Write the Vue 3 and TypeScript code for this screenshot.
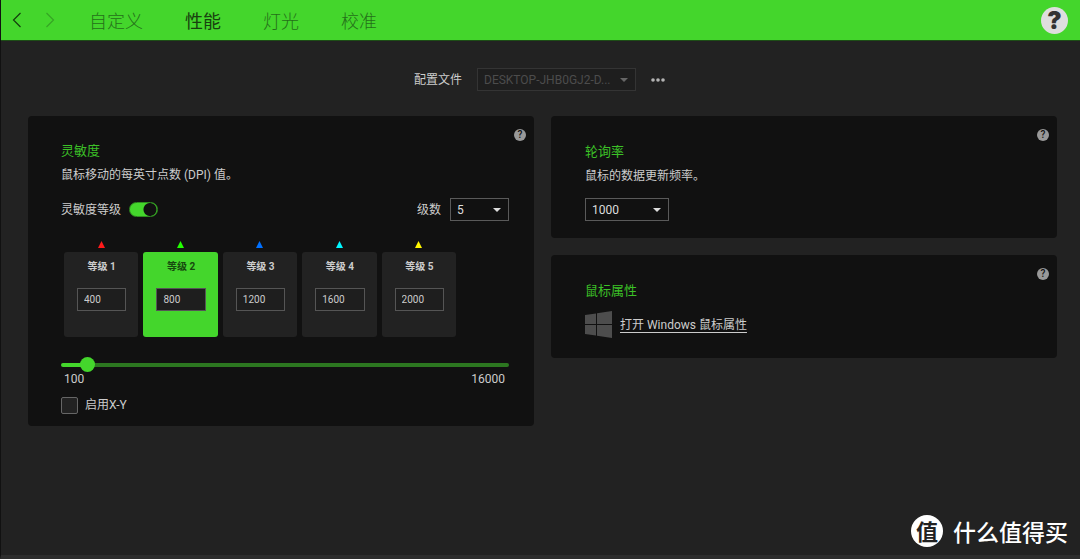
<script setup lang="ts">
import { computed, ref } from 'vue'

interface Tab {
  id: string
  label: string
}

interface Stage {
  id: number
  dpi: number
  color: string
}

const tabs: Tab[] = [
  { id: 'custom', label: '自定义' },
  { id: 'performance', label: '性能' },
  { id: 'lighting', label: '灯光' },
  { id: 'calibration', label: '校准' },
]
const activeTab = ref('performance')

const profile = ref('DESKTOP-JHB0GJ2-D...')

const stagesEnabled = ref(true)
const stageCount = ref(5)
const stages = ref<Stage[]>([
  { id: 1, dpi: 400, color: '#ff1a1a' },
  { id: 2, dpi: 800, color: '#22ff00' },
  { id: 3, dpi: 1200, color: '#0070ff' },
  { id: 4, dpi: 1600, color: '#00f6ff' },
  { id: 5, dpi: 2000, color: '#fff600' },
])
const activeStage = ref(2)
const visibleStages = computed(() => stages.value.slice(0, stageCount.value))

const minDpi = 100
const maxDpi = 16000
const dpi = computed({
  get: () => stages.value[activeStage.value - 1].dpi,
  set: (value: number) => {
    stages.value[activeStage.value - 1].dpi = value
  },
})
const fill = computed(() => `${((dpi.value - minDpi) / (maxDpi - minDpi)) * 100}%`)

const separateXY = ref(false)
const pollingRate = ref(1000)
</script>

<template>
  <div class="app">
    <header class="topbar">
      <button class="nav" type="button" aria-label="后退">
        <svg width="10" height="16" viewBox="0 0 10 16"><path d="M8.5 1 1.5 8l7 7" /></svg>
      </button>
      <button class="nav forward" type="button" aria-label="前进" disabled>
        <svg width="10" height="16" viewBox="0 0 10 16"><path d="m1.5 1 7 7-7 7" /></svg>
      </button>
      <nav class="tabs">
        <button
          v-for="tab in tabs"
          :key="tab.id"
          type="button"
          class="tab"
          :class="{ active: tab.id === activeTab }"
          @click="activeTab = tab.id"
        >
          {{ tab.label }}
        </button>
      </nav>
      <button class="help-main" type="button" aria-label="帮助">?</button>
    </header>

    <main class="content">
      <div class="profile">
        <label for="profile">配置文件</label>
        <span class="select wide disabled">
          <select id="profile" v-model="profile" disabled>
            <option>DESKTOP-JHB0GJ2-D...</option>
          </select>
        </span>
        <button class="more" type="button" aria-label="更多">
          <svg width="14" height="4" viewBox="0 0 14 4">
            <circle cx="2" cy="2" r="1.8" /><circle cx="7" cy="2" r="1.8" /><circle cx="12" cy="2" r="1.8" />
          </svg>
        </button>
      </div>

      <div class="columns">
        <section class="card sensitivity">
          <button class="help" type="button" aria-label="灵敏度帮助">?</button>
          <h2>灵敏度</h2>
          <p>鼠标移动的每英寸点数 (DPI) 值。</p>

          <div class="row">
            <label for="stages-on">灵敏度等级</label>
            <input id="stages-on" v-model="stagesEnabled" class="switch" type="checkbox" role="switch" />
            <label class="count-label" for="stage-count">级数</label>
            <span class="select small">
              <select id="stage-count" v-model="stageCount">
                <option v-for="n in 5" :key="n" :value="n">{{ n }}</option>
              </select>
            </span>
          </div>

          <div class="stages">
            <div
              v-for="stage in visibleStages"
              :key="stage.id"
              class="stage"
              :class="{ active: stage.id === activeStage }"
              @click="activeStage = stage.id"
            >
              <svg class="marker" width="7" height="7" viewBox="0 0 7 7">
                <path d="M3.5 0 7 7H0z" :fill="stage.color" />
              </svg>
              <div class="tile">
                <label :for="`stage-${stage.id}`">等级 {{ stage.id }}</label>
                <input :id="`stage-${stage.id}`" v-model.number="stage.dpi" type="text" inputmode="numeric" />
              </div>
            </div>
          </div>

          <input
            v-model.number="dpi"
            class="slider"
            type="range"
            :min="minDpi"
            :max="maxDpi"
            step="100"
            aria-label="DPI"
            :style="{ '--fill': fill }"
          />
          <div class="limits">
            <span>{{ minDpi }}</span>
            <span>{{ maxDpi }}</span>
          </div>

          <div class="check">
            <input id="xy" v-model="separateXY" type="checkbox" />
            <label for="xy">启用X-Y</label>
          </div>
        </section>

        <div class="side">
          <section class="card polling">
            <button class="help" type="button" aria-label="轮询率帮助">?</button>
            <h2>轮询率</h2>
            <p><label for="polling">鼠标的数据更新频率。</label></p>
            <span class="select medium">
              <select id="polling" v-model="pollingRate">
                <option :value="125">125</option>
                <option :value="500">500</option>
                <option :value="1000">1000</option>
              </select>
            </span>
          </section>

          <section class="card properties">
            <button class="help" type="button" aria-label="鼠标属性帮助">?</button>
            <h2>鼠标属性</h2>
            <div class="system">
              <svg width="27" height="27" viewBox="0 0 27 27">
                <path d="M0 4 11 2.4V13H0zM12 2.2 27 0v13H12zM0 14h11v10.6L0 23zM12 14h15v13l-15-2.2z" />
              </svg>
              <a href="#">打开 Windows 鼠标属性</a>
            </div>
          </section>
        </div>
      </div>
    </main>

    <div class="watermark">
      <span class="seal">值</span>
      <span>什么值得买</span>
    </div>
  </div>
</template>

<style>
body {
  margin: 0;
  background: #222;
}
</style>

<style scoped>
.app {
  --green: #44d62c;
  position: relative;
  box-sizing: border-box;
  display: flex;
  flex-direction: column;
  min-height: 100vh;
  border-left: 1px solid #111;
  border-bottom: 4px solid #2d2d2d;
  background: #222;
  color: #ccc;
  font: 12px/18px Roboto, "Noto Sans CJK SC", sans-serif;
}

button,
input,
select {
  box-sizing: border-box;
  margin: 0;
  padding: 0;
  border: 0;
  background: none;
  color: inherit;
  font: inherit;
}

button {
  cursor: pointer;
}

svg {
  display: block;
}

.topbar {
  display: flex;
  align-items: center;
  height: 40px;
  padding: 0 12px 0 11px;
  border-bottom: 1px solid #1d4d16;
  background: var(--green);
}

.nav svg {
  fill: none;
  stroke: #143d0e;
  stroke-width: 1.2;
}

.nav.forward {
  margin-left: 23px;
}

.nav.forward svg {
  stroke: #36a525;
}

.tabs {
  display: flex;
  gap: 42px;
  margin-left: 34px;
}

.tab {
  padding-top: 3px;
  color: #24701a;
  font-size: 18px;
  font-weight: 300;
  line-height: 28px;
}

.tab.active {
  color: #18400f;
  font-weight: 400;
}

.help-main {
  width: 27px;
  height: 27px;
  margin-left: auto;
  border-radius: 50%;
  background: #dedede;
  color: #333;
  font: 900 24px/27px Inter, sans-serif;
}

.content {
  flex: 1;
  padding: 27px 23px 24px 27px;
}

.profile {
  display: flex;
  align-items: center;
  justify-content: center;
  gap: 15px;
  padding-right: 6px;
}

.more svg {
  fill: #b4b4b4;
}

.select {
  position: relative;
  display: block;
  height: 23px;
}

.select::after {
  content: "";
  position: absolute;
  top: 10px;
  right: 8px;
  border: 4px solid transparent;
  border-top-color: #ddd;
  border-bottom: 0;
  pointer-events: none;
}

.select select {
  display: block;
  width: 100%;
  height: 23px;
  padding: 0 6px;
  border: 1px solid #5a5a5a;
  appearance: none;
  color: #ddd;
}

.select option {
  background: #222;
}

.select.disabled select {
  border-color: #343434;
  background: #1e1e1e;
  color: #4c4c4c;
  opacity: 1;
}

.select.disabled::after {
  border-top-color: #666;
}

.wide {
  width: 159px;
}

.medium {
  width: 84px;
}

.small {
  width: 59px;
}

.columns {
  display: grid;
  grid-template-columns: 1fr 1fr;
  align-items: start;
  gap: 17px;
  margin-top: 25px;
}

.side {
  display: grid;
  gap: 17px;
}

.card {
  position: relative;
  padding: 26px 25px 17px 34px;
  border-radius: 4px;
  background: #111;
}

.card.sensitivity {
  padding: 25px 25px 12px 33px;
}

.card h2 {
  margin: 0;
  color: #3cc027;
  font-size: 13px;
  font-weight: 400;
  line-height: 20px;
}

.card p {
  margin: 5px 0 0;
}

.help {
  position: absolute;
  top: 13px;
  right: 8px;
  width: 12px;
  height: 12px;
  border-radius: 50%;
  background: #999;
  color: #111;
  font-size: 10px;
  font-weight: 500;
  line-height: 12px;
}

.row {
  display: flex;
  align-items: center;
  margin-top: 14px;
}

.switch {
  width: 29px;
  height: 15px;
  margin-left: 8px;
  border: 1px solid #2f8e20;
  border-radius: 8px;
  appearance: none;
  background: radial-gradient(circle at 7px 50%, #888 6px, transparent 7px);
}

.switch:checked {
  background: radial-gradient(circle at 20px 50%, #111 6px, var(--green) 7px);
}

.count-label {
  margin: 0 9px 0 auto;
}

.stages {
  display: grid;
  grid-template-columns: repeat(5, 1fr);
  gap: 5px;
  margin: 20px 53px 0 3px;
}

.marker {
  margin: 0 auto 4px;
}

.tile {
  box-sizing: border-box;
  height: 85px;
  padding: 6px 12px 0 13px;
  border-radius: 3px;
  background: #222;
  font-size: 10px;
}

.tile label {
  display: block;
  font-weight: 700;
  text-align: center;
}

.tile input {
  display: block;
  width: 100%;
  height: 23px;
  margin-top: 12px;
  padding: 0 6px;
  border: 1px solid #555;
  background: #1e1e1e;
}

.stage.active .tile {
  background: var(--green);
}

.stage.active label {
  color: #17480f;
}

.slider {
  display: block;
  width: 100%;
  height: 15px;
  margin-top: 20px;
  appearance: none;
}

.slider::-webkit-slider-runnable-track {
  height: 4px;
  border-radius: 2px;
  background: linear-gradient(to right, var(--green) var(--fill), #2c7720 var(--fill));
}

.slider::-webkit-slider-thumb {
  width: 15px;
  height: 15px;
  margin-top: -6px;
  border-radius: 50%;
  appearance: none;
  background: var(--green);
}

.limits {
  display: flex;
  justify-content: space-between;
  padding: 0 4px 0 3px;
  line-height: 14px;
}

.check {
  display: flex;
  align-items: center;
  gap: 7px;
  margin-top: 10px;
}

.check input {
  width: 17px;
  height: 17px;
  border: 1px solid #666;
  border-radius: 2px;
  appearance: none;
  background: #222;
}

.check input:checked {
  background: var(--green);
}

.polling .select {
  margin-top: 13px;
}

.card.properties {
  padding-bottom: 20px;
}

.system {
  display: flex;
  align-items: center;
  gap: 8px;
  margin-top: 10px;
}

.system svg {
  fill: #4d4d4d;
}

.system a {
  color: #ccc;
  text-underline-offset: 3px;
}

.watermark {
  position: absolute;
  right: 12px;
  bottom: 8px;
  display: flex;
  align-items: center;
  gap: 10px;
  color: #fff;
  font: 500 23px/30px "Noto Sans CJK SC", sans-serif;
}

.seal {
  width: 32px;
  height: 32px;
  border-radius: 50%;
  background: #fff;
  color: #222;
  font-size: 22px;
  font-weight: 700;
  text-align: center;
}
</style>
